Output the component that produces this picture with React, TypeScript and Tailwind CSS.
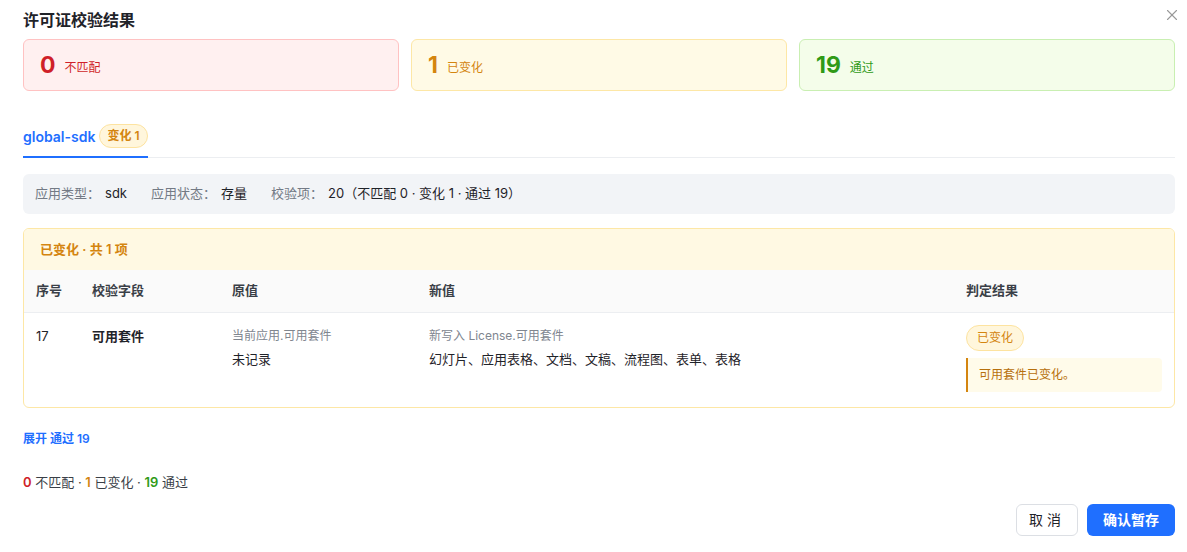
import { X } from 'lucide-react';

const font = { fontFamily: '"Inter", "Noto Sans CJK SC", sans-serif' };

function StatCard({ n, label, tone }: { n: number; label: string; tone: 'red' | 'amber' | 'green' }) {
  const styles = {
    red: 'border-[#ffc2c2] bg-[#fff0f0] text-[#cf1f28]',
    amber: 'border-[#fde7a6] bg-[#fffae6] text-[#d4850f]',
    green: 'border-[#c9efb2] bg-[#f4fdea] text-[#2f9a17]',
  }[tone];
  return (
    <div className={`flex h-[52px] items-center gap-[9px] rounded-md border px-[16px] ${styles}`}>
      <span className="text-[23px] font-bold leading-none">{n}</span>
      <span className="mt-[6px] text-[12px]">{label}</span>
    </div>
  );
}

export default function App() {
  return (
    <div className="h-[552px] w-[1187px] bg-white pl-[23px] pr-[12px] text-[#1f2329]" style={font}>
      <div className="flex h-[39px] items-center justify-between">
        <h1 className="text-[16px] font-semibold">许可证校验结果</h1>
        <X className="-mt-[10px] mr-[-6px] h-[18px] w-[18px] text-[#999]" strokeWidth={1.5} />
      </div>

      <div className="grid grid-cols-3 gap-[12px]">
        <StatCard n={0} label="不匹配" tone="red" />
        <StatCard n={1} label="已变化" tone="amber" />
        <StatCard n={19} label="通过" tone="green" />
      </div>

      <div className="mt-[33px] flex border-b border-[#eceef1]">
        <div className="-mb-px flex items-center gap-[4px] border-b-2 border-[#1f6fff] pb-[8px]">
          <span className="text-[14px] font-semibold text-[#1f6fff]">global-sdk</span>
          <span className="rounded-full border border-[#fde3a0] bg-[#fff6dc] px-[7px] py-[2px] text-[12px] font-semibold text-[#d4850f]">变化 1</span>
        </div>
      </div>

      <div className="mt-[16px] flex h-[40px] items-center gap-[24px] rounded-md bg-[#f2f4f7] px-[12px] text-[13px]">
        <span><span className="text-[#737a85]">应用类型：</span><span className="ml-[5px]">sdk</span></span>
        <span><span className="text-[#737a85]">应用状态：</span><span className="ml-[5px]">存量</span></span>
        <span><span className="text-[#737a85]">校验项：</span><span className="ml-[5px]">20（不匹配 0 · 变化 1 · 通过 19）</span></span>
      </div>

      <div className="mt-[14px] overflow-hidden rounded-md border border-[#fde7a6]">
        <div className="flex h-[41px] items-center bg-[#fff9e3] px-[16px] text-[13px] font-semibold text-[#d4850f]">已变化 · 共 1 项</div>
        <div className="grid h-[43px] grid-cols-[56px_140px_197px_537px_1fr] items-center border-b border-[#eceef1] bg-[#fafafa] px-[12px] text-[13px] font-semibold text-[#3a3f47]">
          <span>序号</span>
          <span>校验字段</span>
          <span>原值</span>
          <span>新值</span>
          <span>判定结果</span>
        </div>
        <div className="grid grid-cols-[56px_140px_197px_537px_1fr] px-[12px] pb-[15px] pt-[12px] text-[13px]">
          <span className="pt-[2px]">17</span>
          <span className="pt-[2px] font-semibold">可用套件</span>
          <div className="pt-[2px]">
            <div className="text-[12px] text-[#80868f]">当前应用.可用套件</div>
            <div className="mt-[5px]">未记录</div>
          </div>
          <div className="pt-[2px]">
            <div className="text-[12px] text-[#80868f]">新写入 License.可用套件</div>
            <div className="mt-[5px]">幻灯片、应用表格、文档、文稿、流程图、表单、表格</div>
          </div>
          <div>
            <span className="inline-block rounded-full border border-[#fde3a0] bg-[#fff6dc] px-[10px] py-[3px] text-[12px] text-[#d4850f]">已变化</span>
            <div className="mt-[7px] rounded-r-sm border-l-2 border-[#d4850f] bg-[#fffbea] px-[11px] py-[8px] text-[12px] text-[#b7700c]">可用套件已变化。</div>
          </div>
        </div>
      </div>

      <div className="mt-[22px] text-[12px] font-semibold text-[#1f6fff]">展开 通过 19</div>

      <div className="mt-[25px] text-[13px] text-[#3a3f47]">
        <span className="font-semibold text-[#cf1f28]">0</span> 不匹配 · <span className="font-semibold text-[#d4850f]">1</span> 已变化 · <span className="font-semibold text-[#2f9a17]">19</span> 通过
      </div>

      <div className="mt-[11px] flex justify-end gap-[9px]">
        <button className="h-[32px] w-[62px] rounded-md border border-[#dcdfe4] bg-white text-[14px] tracking-[4px] text-[#1f2329]">取消</button>
        <button className="h-[32px] w-[88px] rounded-md bg-[#1f6fff] text-[14px] font-semibold text-white">确认暂存</button>
      </div>
    </div>
  );
}
